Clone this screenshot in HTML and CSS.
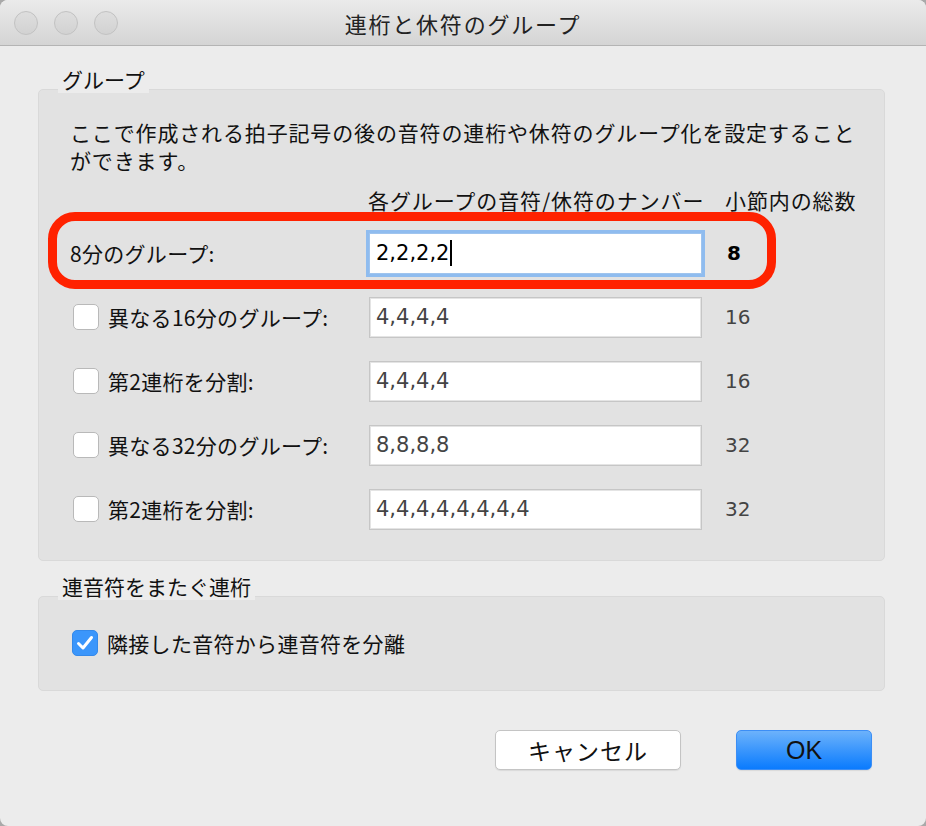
FILE: index.html
```html
<!DOCTYPE html>
<html>
	<head>
		<meta charset="UTF-8">
		<title>連桁と休符のグループ</title>
		<link rel="stylesheet" href="styles.css">
	</head>
	<body>
		<div class="window">
			<!--タイトルバー-->
			<div class="titlebar">
				<div class="lights">
					<i></i><i></i><i></i>
				</div>
				<h1 class="title">連桁と休符のグループ</h1>
			</div>

			<div class="content">
				<!--グループ-->
				<div class="legend">グループ</div>
				<div class="group main">
					<p class="desc">ここで作成される拍子記号の後の音符の連桁や休符のグループ化を設定すること<br>ができます。</p>

					<div class="row head">
						<span></span>
						<span>各グループの音符/休符のナンバー</span>
						<span>小節内の総数</span>
					</div>

					<div class="row marked">
						<label class="lbl">8分のグループ:</label>
						<div class="field focus">2,2,2,2<b class="caret"></b></div>
						<span class="num strong">8</span>
					</div>

					<div class="row">
						<label class="lbl"><span class="check"></span>異なる16分のグループ:</label>
						<div class="field">4,4,4,4</div>
						<span class="num">16</span>
					</div>

					<div class="row">
						<label class="lbl"><span class="check"></span>第2連桁を分割:</label>
						<div class="field">4,4,4,4</div>
						<span class="num">16</span>
					</div>

					<div class="row">
						<label class="lbl"><span class="check"></span>異なる32分のグループ:</label>
						<div class="field">8,8,8,8</div>
						<span class="num">32</span>
					</div>

					<div class="row">
						<label class="lbl"><span class="check"></span>第2連桁を分割:</label>
						<div class="field">4,4,4,4,4,4,4,4</div>
						<span class="num">32</span>
					</div>
				</div>

				<!--連音符をまたぐ連桁-->
				<div class="legend">連音符をまたぐ連桁</div>
				<div class="group second">
					<label class="lbl">
						<span class="check on">
							<svg width="18" height="16" viewBox="0 0 18 16"><path d="M2.5 8.5 L7 13 L15.5 2.5" fill="none" stroke="#fff" stroke-width="3" stroke-linecap="round" stroke-linejoin="round"/></svg>
						</span>隣接した音符から連音符を分離
					</label>
				</div>

				<!--ボタン-->
				<div class="buttons">
					<a href="#" class="btn">キャンセル</a>
					<a href="#" class="btn ok">OK</a>
				</div>
			</div>
		</div>
	</body>
</html>
```

FILE: styles.css
```css
*{
	margin: 0;
	padding: 0;
	box-sizing: border-box;
}
body{
	background: #a9a9a9;
	font-family: "Noto Sans CJK JP", "Liberation Sans", sans-serif;
	color: #111;
}
.window{
	width: 926px;
	height: 826px;
	background: #ececec;
	border-radius: 8px;
	overflow: hidden;
}
.titlebar{
	height: 46px;
	background: linear-gradient(#ebebeb, #d4d4d4);
	border-bottom: 1px solid #b4b4b4;
	display: flex;
	align-items: center;
	position: relative;
}
.lights{
	display: flex;
	gap: 16px;
	padding-left: 14px;
}
.lights i{
	width: 24px;
	height: 24px;
	border-radius: 50%;
	background: linear-gradient(#dedede, #d2d2d2);
	border: 1px solid #c2c2c2;
}
.title{
	position: absolute;
	left: 0;
	right: 0;
	text-align: center;
	font-size: 22px;
	font-weight: normal;
	letter-spacing: 1.8px;
	color: #222;
	pointer-events: none;
}
.content{
	padding: 19px 41px 0 38px;
}
.legend{
	display: block;
	width: fit-content;
	height: 28px;
	line-height: 28px;
	padding: 0 4px;
	margin-left: 20px;
	margin-bottom: -4px;
	font-size: 21px;
	background: #ececec;
	position: relative;
	z-index: 1;
}
.group{
	background: #e2e2e2;
	border: 1px solid #d9d9d9;
	border-radius: 5px;
}
.group.main{
	padding: 28px 20px 19px 31px;
	margin-bottom: 11px;
}
.desc{
	font-size: 21px;
	line-height: 28px;
	letter-spacing: 0.85px;
	white-space: nowrap;
}
.row{
	display: grid;
	grid-template-columns: 276px 333px auto;
	column-gap: 23px;
	align-items: center;
	height: 64px;
	position: relative;
}
.row.head{
	height: 27px;
	margin: 11px 0 9px;
	font-size: 21px;
	letter-spacing: 0.9px;
	white-space: nowrap;
}
.row.head span:nth-child(2){
	margin-left: -1px;
}
.row.marked::after{
	content: '';
	box-sizing: border-box;
	position: absolute;
	left: -22px;
	top: -9px;
	width: 728px;
	height: 77px;
	border: 9px solid #ff2200;
	border-radius: 27px;
	pointer-events: none;
}
.lbl{
	display: flex;
	align-items: center;
	font-size: 21px;
	letter-spacing: 0.3px;
	white-space: nowrap;
}
.check{
	width: 26px;
	height: 26px;
	margin: 0 9px 0 3px;
	background: #fff;
	border: 1px solid #b9b9b9;
	border-radius: 5px;
	display: flex;
	align-items: center;
	justify-content: center;
	flex-shrink: 0;
}
.check.on{
	background: #3b96fb;
	border-color: #3489ea;
	margin-left: 2px;
}
.field{
	height: 41px;
	background: #fff;
	border: 1px solid #c6c6c6;
	box-shadow: inset 0 0 0 1px #e4e4e4;
	font-family: "DejaVu Sans", sans-serif;
	font-size: 21px;
	color: #444;
	line-height: 39px;
	padding-left: 6px;
	display: flex;
	align-items: center;
}
.field.focus{
	color: #000;
	border-color: #9fc4ee;
	box-shadow: 0 0 0 3px #8fbcef;
}
.caret{
	width: 2px;
	height: 26px;
	background: #000;
	margin-left: 1px;
}
.num{
	font-family: "DejaVu Sans", sans-serif;
	font-size: 20px;
	color: #444;
}
.num.strong{
	color: #000;
	font-weight: bold;
	padding-left: 2px;
}
.group.second{
	padding: 25px 20px 27px 31px;
	height: 95px;
	display: flex;
	align-items: center;
}
.buttons{
	display: flex;
	justify-content: flex-end;
	gap: 55px;
	padding-right: 13px;
	margin-top: 39px;
}
.btn{
	width: 186px;
	height: 40px;
	line-height: 38px;
	text-align: center;
	font-size: 23px;
	color: #111;
	text-decoration: none;
	background: #fff;
	border: 1px solid #c4c4c4;
	border-radius: 5px;
	box-shadow: 0 1px 1px rgba(0,0,0,0.08);
	letter-spacing: 1px;
}
.btn.ok{
	width: 136px;
	font-family: "Liberation Sans", sans-serif;
	font-size: 25px;
	background: linear-gradient(#6cb2fb, #0a7bfe);
	border-color: #3c8ef5;
	letter-spacing: 0;
}
```
